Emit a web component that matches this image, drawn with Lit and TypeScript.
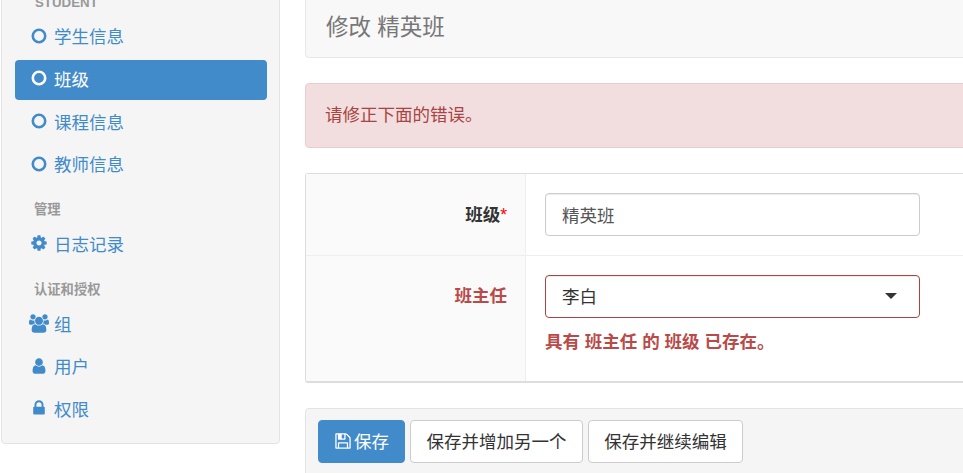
import { LitElement, html, css, svg } from "lit";
import { customElement } from "lit/decorators.js";

const P: Record<string, [string, string]> = {
  cog: ["0 0 1792 1792", "M1152 896q0-106-75-181t-181-75-181 75-75 181 75 181 181 75 181-75 75-181zm512-109v222q0 12-8 23t-20 13l-185 28q-19 54-39 91 35 50 107 138 10 12 10 25t-9 23q-27 37-99 108t-94 71q-12 0-26-9l-138-108q-44 23-91 38-16 136-29 186-7 28-36 28h-222q-14 0-24.500-8.500t-11.500-21.500l-28-184q-49-16-90-37l-141 107q-10 9-25 9-14 0-25-11-126-114-165-168-7-10-7-23 0-12 8-23 15-21 51-66.500t54-70.500q-27-50-41-99l-183-27q-13-2-21-12.500t-8-23.500v-222q0-12 8-23t19-13l186-28q14-46 39-92-40-57-107-138-10-12-10-24 0-10 9-23 26-36 98.500-107.500t94.500-71.500q13 0 26 10l138 107q44-23 91-38 16-136 29-186 7-28 36-28h222q14 0 24.500 8.500t11.500 21.500l28 184q49 16 90 37l142-107q9-9 24-9 13 0 25 10 129 119 165 170 7 8 7 22 0 12-8 23-15 21-51 66.500t-54 70.500q26 50 41 98l183 28q13 2 21 12.500t8 23.500z"],
  user: ["0 0 1792 1792", "M1536 1399q0 109-62.500 187t-150.500 78h-854q-88 0-150.500-78t-62.500-187q0-85 8.500-160.500t31.500-152 58.500-131 94-89 134.500-34.500q131 128 313 128t313-128q76 0 134.500 34.500t94 89 58.500 131 31.500 152 8.500 160.500zm-256-887q0 159-112.500 271.500t-271.500 112.500-271.500-112.500-112.500-271.500 112.500-271.500 271.500-112.500 271.500 112.500 112.500 271.500z"],
  lock: ["0 0 1792 1792", "M640 768h512v-192q0-106-75-181t-181-75-181 75-75 181v192zm832 96v576q0 40-28 68t-68 28h-960q-40 0-68-28t-28-68v-576q0-40 28-68t68-28h32v-192q0-184 132-316t316-132 316 132 132 316v192h32q40 0 68 28t28 68z"],
  users: ["0 0 1920 1792", "M593 896q-162 5-265 128h-134q-82 0-138-40.500t-56-118.500q0-353 124-353 6 0 43.500 21t97.500 42.500 119 21.500q67 0 133-23-5 37-5 66 0 139 81 256zm1071 637q0 120-73 189.500t-194 69.500h-874q-121 0-194-69.500t-73-189.500q0-53 3.500-103.500t14-109 26.500-108.500 43-97.500 62-81 85.500-53.500 111.500-20q10 0 43 21.500t73 48 107 48 135 21.500 135-21.500 107-48 73-48 43-21.500q61 0 111.500 20t85.500 53.500 62 81 43 97.500 26.500 108.500 14 109 3.500 103.500zm-1024-1277q0 106-75 181t-181 75-181-75-75-181 75-181 181-75 181 75 75 181zm704 384q0 159-112.500 271.500t-271.500 112.500-271.500-112.500-112.500-271.500 112.500-271.500 271.500-112.500 271.500 112.500 112.500 271.500zm576 225q0 78-56 118.500t-138 40.500h-134q-103-123-265-128 81-117 81-256 0-29-5-66 66 23 133 23 59 0 119-21.500t97.500-42.500 43.500-21q124 0 124 353zm-128-609q0 106-75 181t-181 75-181-75-75-181 75-181 181-75 181 75 75 181z"],
  save: ["0 0 1792 1792", "M512 1536h768v-384h-768v384zm896 0h128v-896q0-14-10-38.500t-20-34.500l-281-281q-10-10-34-20t-39-10v416q0 40-28 68t-68 28h-576q-40 0-68-28t-28-68v-416h-128v1280h128v-416q0-40 28-68t68-28h832q40 0 68 28t28 68v416zm-384-928v-320q0-13-9.500-22.500t-22.500-9.500h-192q-13 0-22.500 9.500t-9.500 22.500v320q0 13 9.500 22.500t22.500 9.500h192q13 0 22.500-9.500t9.500-22.500zm640 32v928q0 40-28 68t-68 28h-1344q-40 0-68-28t-28-68v-1344q0-40 28-68t68-28h928q40 0 88 20t76 48l280 280q28 28 48 76t20 88z"],
};

const icon = (n: string, w: number, h: number) =>
  svg`<svg class="ic" width=${w} height=${h} viewBox=${P[n][0]} fill="currentColor"><path d=${P[n][1]}></path></svg>`;

const ring = svg`<svg class="ic" width="16" height="16" viewBox="0 0 16 16"><circle cx="8" cy="8" r="6.2" fill="none" stroke="currentColor" stroke-width="2.6"></circle></svg>`;

@customElement("app-root")
export class AppRoot extends LitElement {
  static styles = css`
    :host {
      display: block;
      width: 963px;
      height: 473px;
      overflow: hidden;
      background: #fff;
      font-family: "Liberation Sans", "Noto Sans CJK SC", sans-serif;
      font-size: 17.5px;
      color: #333;
    }
    * { box-sizing: border-box; }
    .page {
      display: flex;
      align-items: flex-start;
      width: 1300px;
      margin-top: -30px;
      padding-left: 1px;
    }
    .side {
      flex: none;
      width: 279px;
      height: 474px;
      margin-right: 25px;
      padding: 23px 12px 0 13px;
      background: #f5f5f5;
      border: 1px solid #e3e3e3;
      border-radius: 4px;
    }
    .hd {
      height: 22px;
      margin-top: -2px;
      margin-bottom: 3px;
      padding-left: 20px;
      font-size: 13.3px;
      font-weight: 700;
      line-height: 22px;
      color: #999;
    }
    .sub { height: 20px; line-height: 20px; margin: 14.5px 0 4.5px; padding-left: 19px; }
    .nav {
      display: flex;
      align-items: center;
      height: 40.67px;
      margin-top: 2px;
      padding: 0 0 3px 16px;
      border-radius: 4px;
      color: #428bca;
    }
    .nav.active { background: #428bca; color: #fff; }
    .iw { display: flex; justify-content: center; width: 16px; margin-right: 7px; flex: none; }
    .ic { display: block; flex: none; }
    .main { flex: none; width: 900px; }
    .title {
      height: 88px;
      padding: 42px 20px 0;
      background: #f8f8f8;
      border: 1px solid #e7e7e7;
      border-radius: 4px;
      font-size: 22.5px;
      line-height: 30px;
      color: #777;
    }
    .alert {
      height: 65px;
      margin-top: 25px;
      padding: 0 20px 4px 19px;
      display: flex;
      align-items: center;
      background: #f2dede;
      border: 1px solid #ebccd1;
      border-radius: 4px;
      color: #a94442;
    }
    .form {
      margin-top: 25px;
      background: #fff;
      border: 1px solid #ddd;
      border-bottom: 2px solid #ddd;
      border-radius: 3px 0 0 3px;
    }
    .row { display: flex; }
    .row + .row { border-top: 1px solid #eee; }
    .label {
      flex: none;
      width: 220px;
      padding: 29px 18px 0 0;
      text-align: right;
      background: #fafafa;
      border-right: 1px solid #eee;
      font-weight: 700;
      line-height: 24px;
    }
    .req { color: #f00; font-weight: 400; }
    .err { color: #b94a48; }
    .row.r2 .label { padding-top: 28px; }
    .field { padding: 19px 20px 19px 19px; }
    .row.r2 .field { padding-bottom: 27px; }
    .input {
      display: flex;
      align-items: center;
      justify-content: space-between;
      width: 375px;
      height: 43px;
      padding: 0 16px;
      background: #fff;
      border: 1px solid #ccc;
      border-radius: 4px;
      color: #555;
      box-shadow: inset 0 1px 1px rgba(0, 0, 0, 0.075);
    }
    .input.bad { border-color: #a94442; color: #333; padding-bottom: 2px; }
    .caret {
      width: 0;
      height: 0;
      margin-right: 6px;
      border-left: 6.5px solid transparent;
      border-right: 6.5px solid transparent;
      border-top: 6.5px solid #333;
    }
    .msg {
      margin-top: 12px;
      font-weight: 700;
      line-height: 24px;
      color: #b94a48;
    }
    .actions {
      display: flex;
      gap: 5px;
      height: 80px;
      margin-top: 25px;
      padding: 11px 12px;
      background: #f5f5f5;
      border: 1px solid #e3e3e3;
      border-radius: 4px;
    }
    .btn {
      display: flex;
      align-items: center;
      justify-content: center;
      height: 43px;
      padding-bottom: 2px;
      background: #fff;
      border: 1px solid #ccc;
      border-radius: 4px;
      color: #333;
    }
    .btn.primary {
      width: 87px;
      gap: 2px;
      background: #428bca;
      border-color: #428bca;
      color: #fff;
    }
    .w1 { width: 173px; }
    .w2 { width: 155px; }
  `;

  render() {
    const item = (t: string, ic: unknown, active = false) => html`
      <div class="nav ${active ? "active" : ""}"><span class="iw">${ic}</span><span>${t}</span></div>`;
    return html`
      <div class="page">
        <aside class="side">
          <div class="hd">STUDENT</div>
          ${item("学生信息", ring)}
          ${item("班级", ring, true)}
          ${item("课程信息", ring)}
          ${item("教师信息", ring)}
          <div class="hd sub">管理</div>
          ${item("日志记录", icon("cog", 18, 18))}
          <div class="hd sub">认证和授权</div>
          ${item("组", icon("users", 20, 19))}
          ${item("用户", icon("user", 18, 18))}
          ${item("权限", icon("lock", 18, 18))}
        </aside>
        <main class="main">
          <div class="title">修改 精英班</div>
          <div class="alert">请修正下面的错误。</div>
          <section class="form">
            <div class="row">
              <div class="label">班级<span class="req">*</span></div>
              <div class="field"><div class="input">精英班</div></div>
            </div>
            <div class="row r2">
              <div class="label err">班主任</div>
              <div class="field">
                <div class="input bad"><span>李白</span><span class="caret"></span></div>
                <div class="msg">具有 班主任 的 班级 已存在。</div>
              </div>
            </div>
          </section>
          <div class="actions">
            <div class="btn primary">${icon("save", 18, 18)}<span>保存</span></div>
            <div class="btn w1">保存并增加另一个</div>
            <div class="btn w2">保存并继续编辑</div>
          </div>
        </main>
      </div>
    `;
  }
}
